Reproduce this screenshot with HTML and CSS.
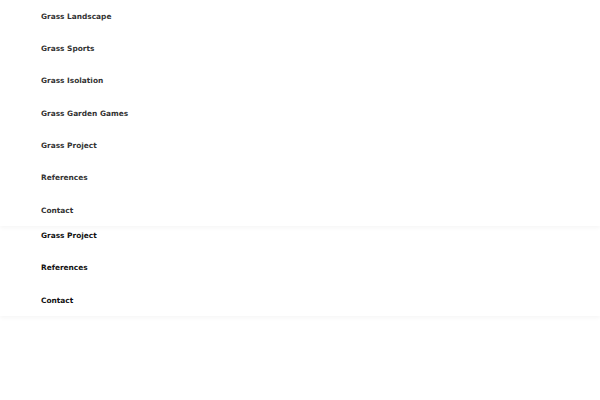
FILE: index.html
```html
<!DOCTYPE html>
<html>
<head>
    <title>Grass</title>
    <meta charset="utf-8">
    <link rel="stylesheet" href="styles.css">
</head>
<body>
    <div class="seite">
        <!-- unteres Menue, nur der sichtbare Rest -->
        <nav class="menue menueUnten">
            <ul>
                <li><a href="#">Grass Project</a></li>
                <li><a href="#">References</a></li>
                <li><a href="#">Contact</a></li>
            </ul>
        </nav>
        <!-- aufgeklapptes Menue liegt oben drueber -->
        <nav class="menue menueOben">
            <ul>
                <li><a href="#">Grass Landscape</a></li>
                <li><a href="#">Grass Sports</a></li>
                <li><a href="#">Grass Isolation</a></li>
                <li><a href="#">Grass Garden Games</a></li>
                <li><a href="#">Grass Project</a></li>
                <li><a href="#">References</a></li>
                <li><a href="#">Contact</a></li>
            </ul>
        </nav>
    </div>
</body>
</html>
```

FILE: styles.css
```css
* {
    margin: 0;
    padding: 0;
    box-sizing: border-box;
}

body {
    background-color: #fff;
    font-family: "DejaVu Sans", sans-serif;
}

.seite {
    position: relative;
    height: 400px;
    padding-top: 219.3px;
}

.menue {
    background-color: #fff;
    box-shadow: 0 2px 4px rgba(0, 0, 0, 0.04);
}

.menue ul {
    list-style: none;
}

.menue li {
    height: 32.33px;
    display: flex;
    align-items: center;
    padding-left: 41px;
}

.menue a {
    font-size: 7.4px;
    font-weight: bold;
    text-decoration: none;
}

.menueUnten a {
    color: #111;
}

.menueOben {
    position: absolute;
    top: 0;
    left: 0;
    right: 0;
}

.menueOben a {
    color: #333;
}
```
